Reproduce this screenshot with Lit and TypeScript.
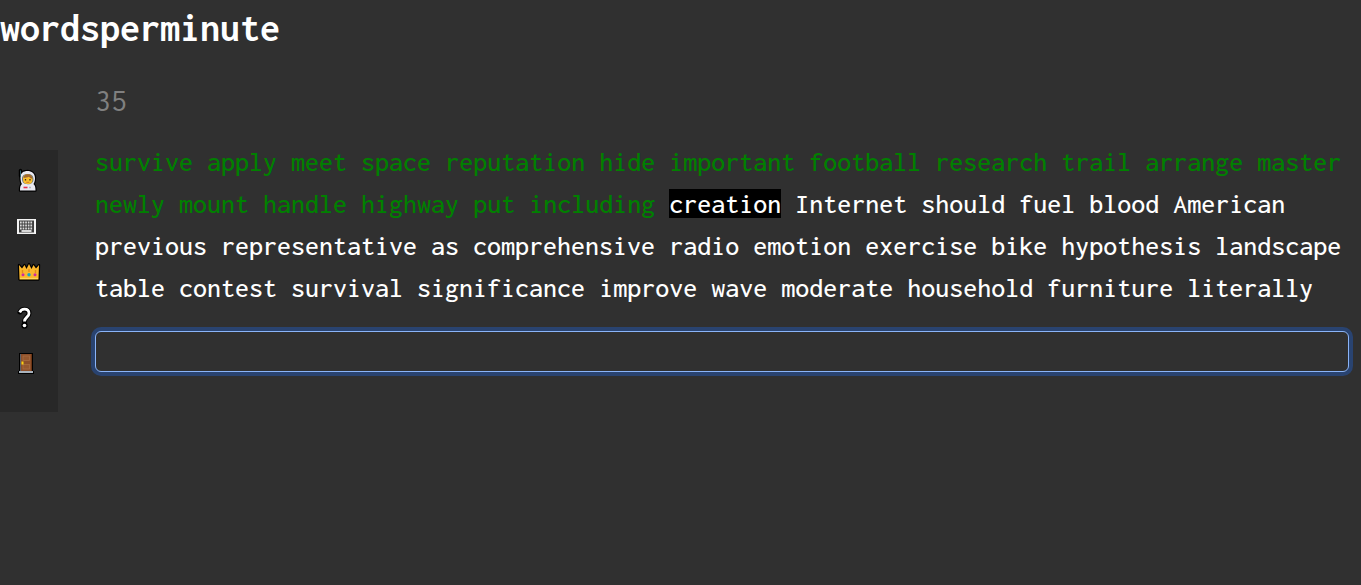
import { LitElement, html, css, svg } from "lit";
import { customElement, property } from "lit/decorators.js";
import { classMap } from "lit/directives/class-map.js";

const WORDS =
  "survive apply meet space reputation hide important football research trail arrange master newly mount handle highway put including creation Internet should fuel blood American previous representative as comprehensive radio emotion exercise bike hypothesis landscape table contest survival significance improve wave moderate household furniture literally".split(
    " "
  );

const astronaut = svg`
  <path d="M6.500 9V3.500" stroke="#000" stroke-width="3.400" stroke-linecap="round"/>
  <path d="M6.500 10.500C6.500 6 9.500 4 13.500 4s7.500 2.500 7.500 7c0 2.800-.6 4.800-1.600 6 1.500 1 2.100 2.800 2.100 6.500H6c0-3.700.5-5.500 2-6.500-1-1.200-1.500-3.500-1.500-6.500z" fill="#e9e9f1" stroke="#000" stroke-width="2.400" stroke-linejoin="round" paint-order="stroke"/>
  <path d="M6.500 10V3.500" stroke="#2d6470" stroke-width="1"/>
  <path d="M8 12c0-3.500 2-5 5.700-5s5.800 1.700 5.800 5.200-2.300 5-5.800 5S8 15.500 8 12z" fill="#66757c"/>
  <path d="M9 12.500c0-3.500 1.300-5 4.700-5s4.800 1.700 4.800 5-1.500 4.500-4.800 4.500S9 15.500 9 12.500z" fill="#fbc02d"/>
  <path d="M9.500 11c.3-2.500 1.700-3.800 4.200-3.800s4.500 1.300 4.800 4.500c-1.500-.3-2.700-.7-3.500-2-1.300.8-3.500 1-5.500 1.300z" fill="#a0682f"/>
  <path d="M11.500 12v1.500M16 12v1.500" stroke="#402b20" stroke-width="1.300"/>
  <path d="M12.300 15.300h3" stroke="#c8642b" stroke-width=".8"/>
  <path d="M9.500 20.500h4" stroke="#e52f4b" stroke-width="1.600"/>
  <path d="M15 20.500h2" stroke="#aeb4bd" stroke-width="1.300"/>`;

const keyboard = svg`
  <rect x="3" y="6" width="19" height="15" fill="#f3f3f3"/>
  <rect x="5" y="7.500" width="15" height="12" fill="#3c3c3c"/>
  <path d="M6 9.500h13M6 12.500h13M6 15.500h13" stroke="#dcdcdc" stroke-width="2" stroke-dasharray="1.700 .9"/>
  <path d="M7.500 18h10" stroke="#fff" stroke-width="1.600"/>`;

const crown = svg`
  <path d="M5.500 20.500 5 6l3 3.500L10.500 6l2 4 2.500-5 2.500 5 2-4 2.500 3.500L25 6l-.5 14.500z" fill="#fbb72c" stroke="#000" stroke-width="2.400" stroke-linejoin="round" paint-order="stroke"/>
  <path d="M6 19.500h18" stroke="#ffd75a" stroke-width="1.200"/>
  <path d="M8.500 11v3M15 10v3M21.500 11v3" stroke="#e08c1c" stroke-width="1.400"/>
  <circle cx="9" cy="15.800" r="1.500" fill="#cf2ba0"/>
  <circle cx="15" cy="15.800" r="1.700" fill="#13a9c4"/>
  <circle cx="21" cy="15.800" r="1.500" fill="#cf2ba0"/>`;

const question = svg`
  <g fill="none" stroke-linejoin="round">
    <path d="M6 7C7 4.900 8.700 4.200 10.500 4.200c2.700 0 4.500 1.600 4.500 4.200 0 3.700-4.500 3.800-4.500 8" stroke="#000" stroke-width="5" stroke-linecap="round"/>
    <circle cx="10.500" cy="20.500" r="1.200" stroke="#000" stroke-width="4"/>
    <path d="M5.700 7.400C6.800 4.900 8.700 4.200 10.500 4.200c2.700 0 4.500 1.600 4.500 4.200 0 3.700-4.500 3.800-4.500 8" stroke="#fff" stroke-width="2.800"/>
  </g>
  <circle cx="10.500" cy="20.500" r="1.800" fill="#fff"/>`;

const door = svg`
  <path d="M5 2h14v18h1v3H4v-3h1z" fill="#000"/>
  <rect x="6" y="3" width="12" height="17" fill="#8c4f2b"/>
  <path d="M6.500 3v17" stroke="#5f646b" stroke-width="1"/>
  <path d="M17.500 3v17" stroke="#6b3515" stroke-width="1"/>
  <rect x="9" y="5" width="6.500" height="4.500" fill="#95582f" stroke="#a96d41" stroke-width=".8"/>
  <rect x="9" y="13.500" width="6.500" height="4.500" fill="#95582f" stroke="#a96d41" stroke-width=".8"/>
  <rect x="7.500" y="10.500" width="2" height="3" fill="#fbd312"/>
  <rect x="5" y="20" width="14" height="2" fill="#a9b3bd"/>`;

const LINKS = [
  { label: "Profile", icon: astronaut },
  { label: "Practice", icon: keyboard },
  { label: "Leaderboard", icon: crown },
  { label: "Help", icon: question },
  { label: "Log out", icon: door },
];

@customElement("side-nav")
class SideNav extends LitElement {
  static styles = css`
    :host {
      display: block;
      background: #282828;
    }
    .links {
      display: flex;
      flex-direction: column;
      gap: 18px;
      padding: 17px 14px 33px;
    }
    .link {
      display: block;
      height: 28px;
    }
    .icon {
      display: block;
      width: 30px;
      height: 28px;
    }
  `;

  render() {
    return html`<nav class="links">
      ${LINKS.map(
        (l) => html`<a class="link" href="#" aria-label=${l.label}>
          <svg class="icon" viewBox="0 0 30 28" fill="none" aria-hidden="true">${l.icon}</svg>
        </a>`
      )}
    </nav>`;
  }
}

@customElement("app-root")
class AppRoot extends LitElement {
  @property({ type: Number }) seconds = 35;
  @property({ type: Number }) position = 18;

  static styles = css`
    :host {
      display: block;
      min-height: 100vh;
      background: #303030;
      color: #fff;
      font-family: Inconsolata, "Noto Sans Mono CJK SC", "Liberation Mono", monospace;
    }
    .title {
      margin: 0;
      padding-top: 4px;
      font-size: 40px;
      line-height: 48px;
      font-weight: 700;
    }
    .layout {
      display: grid;
      grid-template-columns: 58px minmax(0, 1fr);
      column-gap: 37px;
      align-items: start;
      padding: 28px 12px 0 0;
    }
    .nav {
      margin-top: 70px;
    }
    .timer {
      font-size: 32px;
      line-height: 42px;
      color: #808080;
    }
    .words {
      margin: 19px 0 22px;
      font-size: 28px;
      font-weight: 500;
      line-height: 42px;
    }
    .typed {
      color: #008000;
    }
    .current {
      display: inline-block;
      line-height: 29px;
      background: #000;
    }
    .entry {
      display: block;
      box-sizing: border-box;
      width: 100%;
      height: 41px;
      padding: 0 12px;
      border: 1px solid #8ab4f8;
      border-radius: 6px;
      outline: none;
      box-shadow: 0 0 0 4px #294370;
      background: #303030;
      color: #fff;
      font: inherit;
      font-size: 28px;
    }
  `;

  render() {
    return html`
      <h1 class="title">wordsperminute</h1>
      <div class="layout">
        <side-nav class="nav"></side-nav>
        <main>
          <div class="timer">${this.seconds}</div>
          <p class="words">
            ${WORDS.map(
              (word, i) =>
                html`<span class=${classMap({ typed: i < this.position, current: i === this.position })}>${word}</span> `
            )}
          </p>
          <input class="entry" type="text" aria-label="Type the highlighted word" autocomplete="off" />
        </main>
      </div>
    `;
  }
}
